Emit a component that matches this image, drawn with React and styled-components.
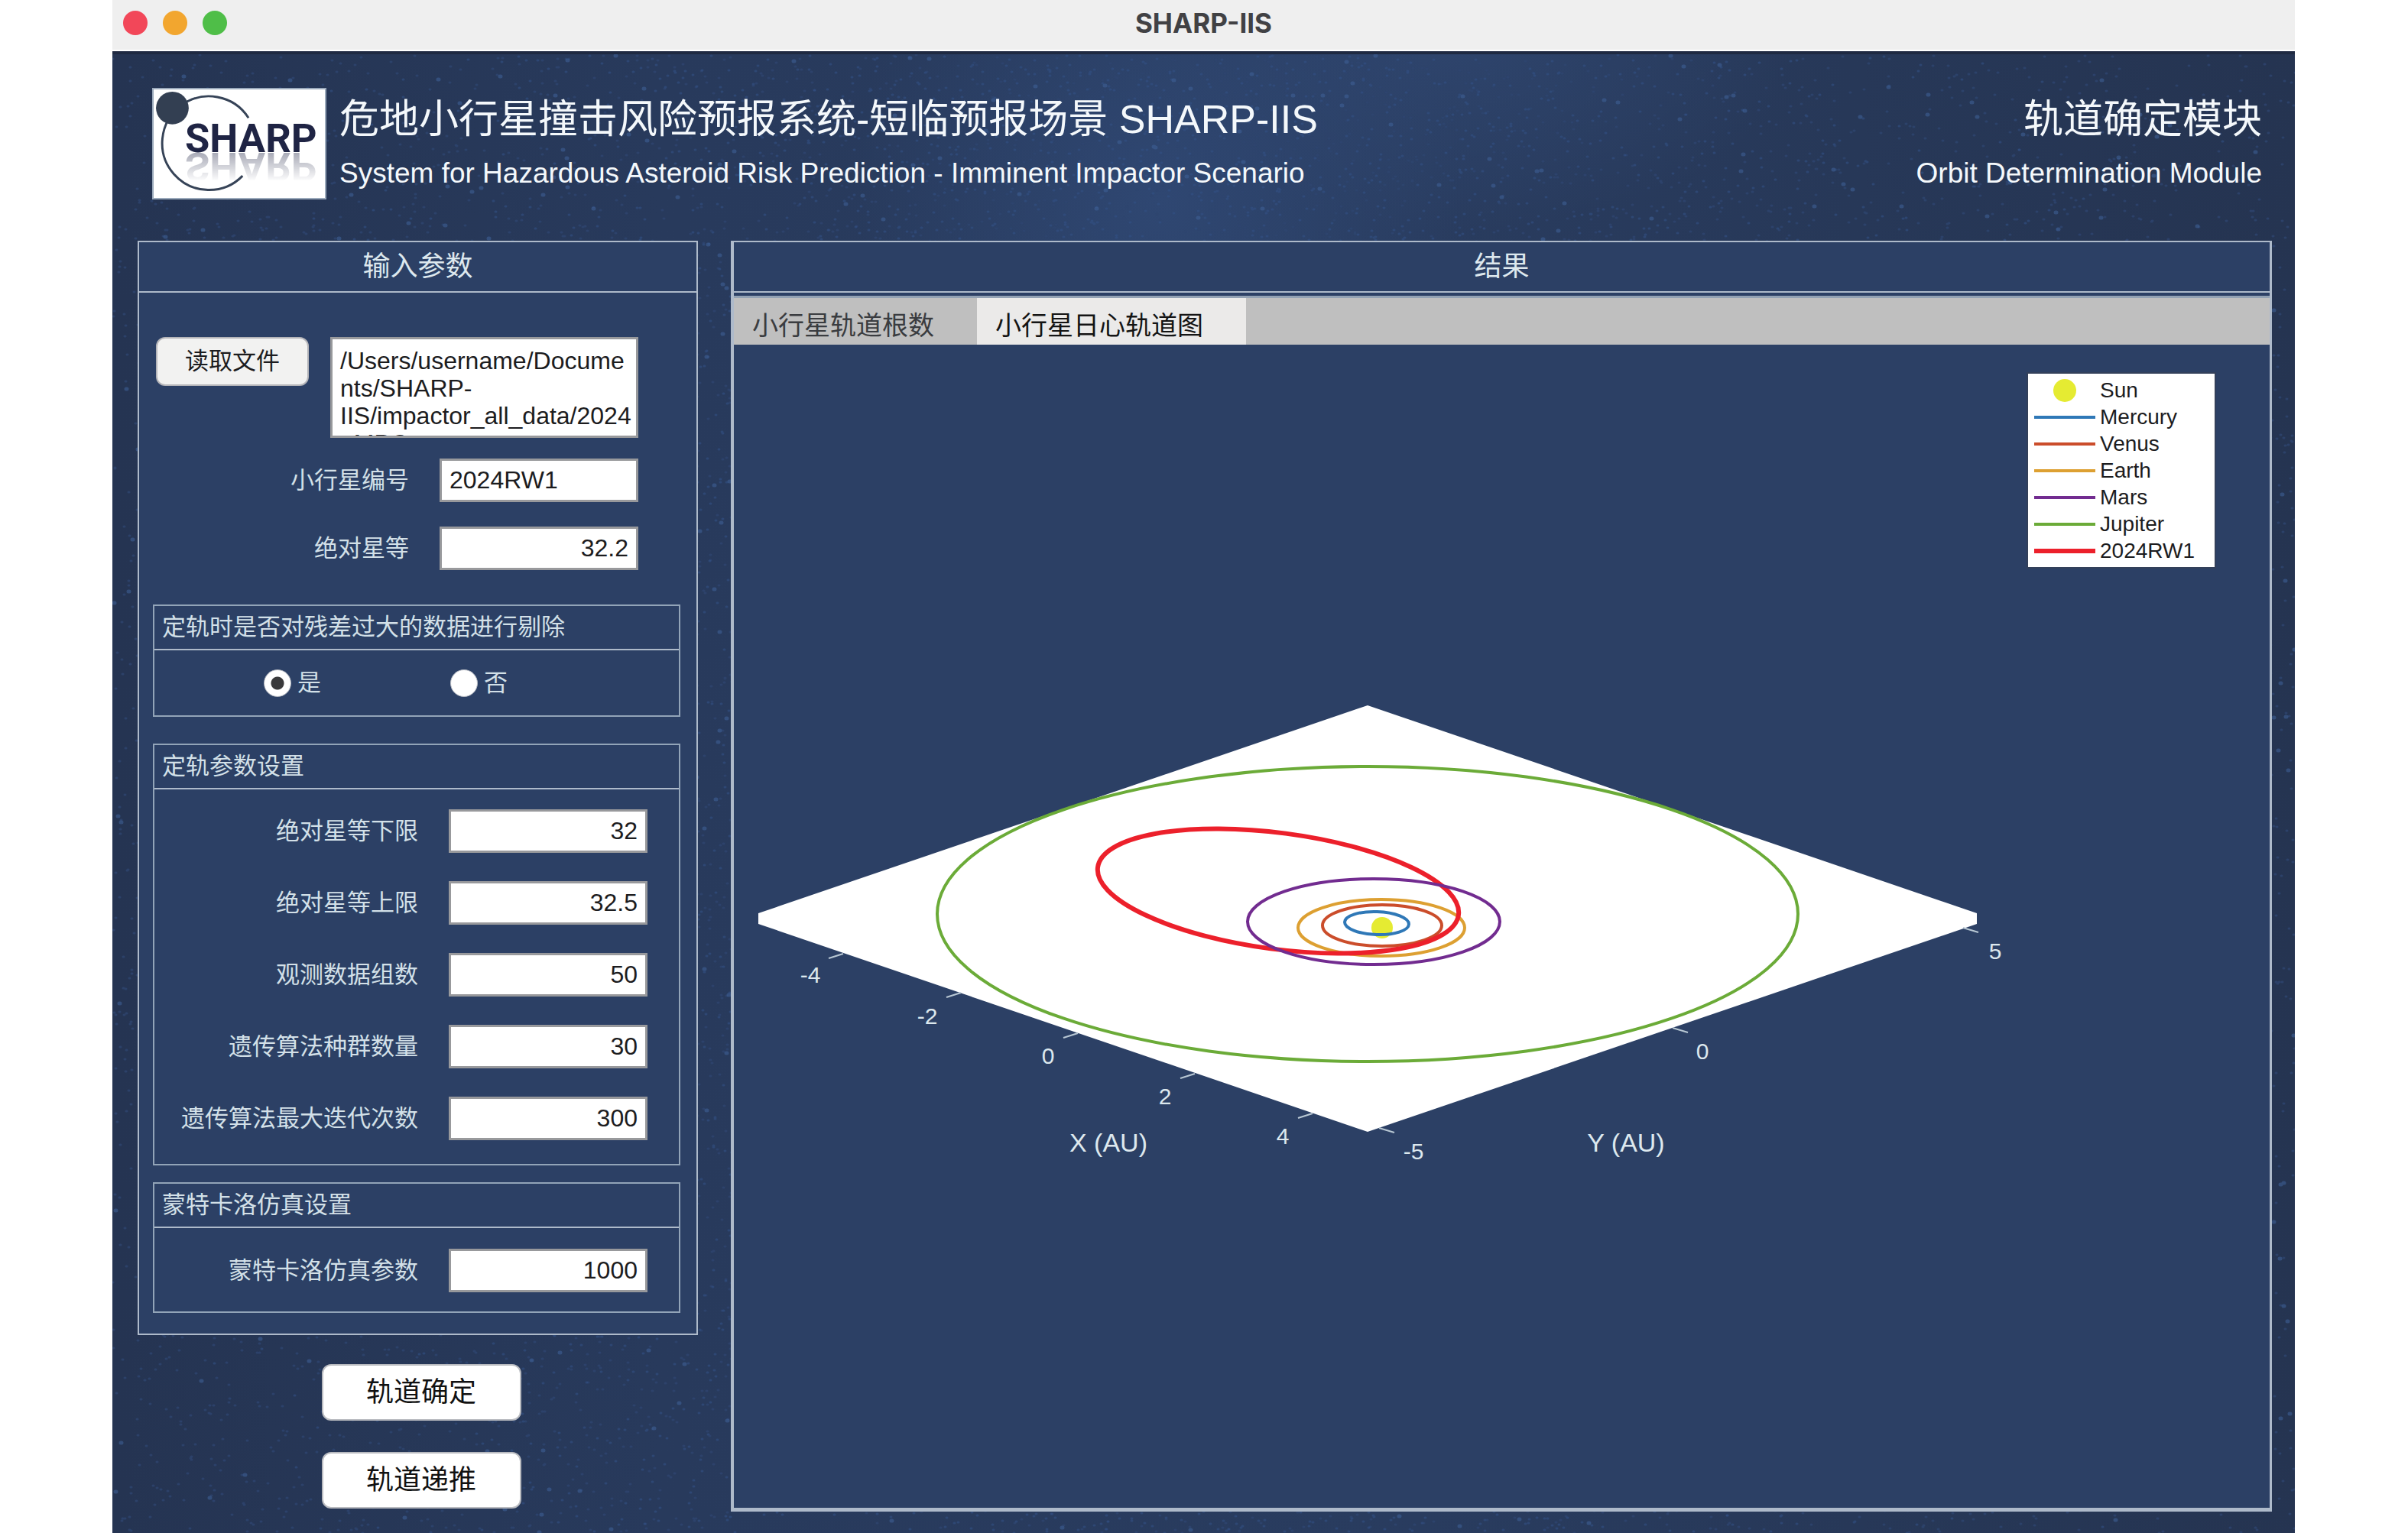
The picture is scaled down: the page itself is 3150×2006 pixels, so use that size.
import React, { useState } from "react";
import styled, { createGlobalStyle } from "styled-components";

const GlobalStyle = createGlobalStyle`
  * {
    box-sizing: border-box;
  }

  body {
    margin: 0;
    background: #fff;
    font-family: "Liberation Sans", "Noto Sans CJK SC", sans-serif;
  }

  button,
  input,
  textarea {
    margin: 0;
    font-family: inherit;
  }
`;

const Page = styled.div`
  padding: 0 148px 0 147px;
`;

const Window = styled.main`
  position: relative;
  z-index: 0;
  display: flex;
  flex-direction: column;
  min-height: 100vh;
  background: radial-gradient(ellipse 14% 22% at 48% 13%, #2f4772, transparent),
    radial-gradient(ellipse 16% 12% at 61% 3%, #2e446c, transparent),
    linear-gradient(90deg, #253452, #283a5c 25%, #293c5f 60%, #253451);
`;

// the stars lie behind everything else in the window
const Sky = styled.svg`
  position: absolute;
  inset: 0;
  z-index: -1;
  width: 100%;
  height: 100%;
  fill: none;
  stroke-linecap: round;
`;

const TitleBar = styled.div`
  display: grid;
  grid-template-columns: 1fr auto 1fr;
  align-items: center;
  height: 71px;
  padding: 0 14px 7px;
  background: #efefef;
  border-bottom: 4px solid #1f2a42;
  box-shadow: inset 0 -2px #fff;
`;

const WindowButtons = styled.div`
  display: flex;
  gap: 20px;
`;

const WindowButton = styled.button`
  width: 32px;
  height: 32px;
  padding: 0;
  border: 0;
  border-radius: 50%;
  background: ${({ $color }) => $color};
`;

const WindowTitle = styled.div`
  font-family: Inter, sans-serif;
  font-size: 35px;
  font-weight: 700;
  line-height: 40px;
  color: #414144;
`;

const Header = styled.header`
  display: flex;
  gap: 17px;
  padding: 44px 43px 54px 52px;
  color: #f4f8fb;
`;

const Logo = styled.svg`
  width: 228px;
  height: 146px;
  border: 2px solid #9aa9bb;
  background: #fff;
`;

const Heading = styled.div`
  padding-top: 2px;
  text-align: ${({ $align }) => $align || "left"};
  margin-left: ${({ $align }) => ($align === "right" ? "auto" : 0)};
`;

const Title = styled.h1`
  margin: 0;
  font-size: 52px;
  font-weight: 400;
  line-height: 78px;
`;

const Subtitle = styled.p`
  margin: 0;
  font-size: 37px;
  line-height: 64px;
`;

const Workspace = styled.div`
  flex: 1;
  display: grid;
  grid-template-columns: 733px minmax(0, 1fr);
  gap: 43px;
  padding: 0 30px 28px 33px;
`;

const Sidebar = styled.div`
  display: flex;
  flex-direction: column;
`;

const Panel = styled.section`
  display: flex;
  flex-direction: column;
  background: #2c4065;
  border-style: solid;
  border-color: #aebaca;
  border-width: ${({ $thick }) => ($thick ? "2px 3px 5px 4px" : "2px")};
`;

const PanelTitle = styled.h2`
  margin: 0;
  border-bottom: 2px solid #aebaca;
  font-size: 36px;
  font-weight: 400;
  line-height: 64px;
  text-align: center;
  color: #dde8ee;
`;

const Form = styled.form`
  display: flex;
  flex-direction: column;
  padding: 58px 21px 27px 18px;
`;

const FileRow = styled.div`
  display: flex;
  justify-content: space-between;
  align-items: flex-start;
  padding: 0 55px 27px 4px;
`;

const FileButton = styled.button`
  width: 200px;
  height: 64px;
  padding: 0;
  border: 2px solid #b5b5b9;
  border-radius: 12px;
  background: #f2f2f1;
  font-size: 31px;
  line-height: 56px;
  color: #1c1c1e;
`;

const FilePath = styled.textarea`
  width: 403px;
  height: 132px;
  padding: 10px 0 0 10px;
  border: 3px solid #98999c;
  border-radius: 0;
  background: #fff;
  font-size: 32px;
  line-height: 36px;
  color: #1c1c1e;
  resize: none;
  overflow: hidden;
`;

const Fields = styled.div`
  display: flex;
  flex-direction: column;
  gap: ${({ $gap }) => $gap}px;
  padding: ${({ $padding }) => $padding};
`;

const FieldRow = styled.div`
  display: flex;
  justify-content: flex-end;
  align-items: center;
  gap: 40px;
`;

const FieldLabel = styled.label`
  font-size: 31px;
  line-height: 40px;
  color: #d3e0e8;
`;

const FieldInput = styled.input`
  width: 260px;
  height: 57px;
  padding: 0 10px;
  border: 3px solid #98999c;
  border-radius: 0;
  background: #fff;
  font-size: 32px;
  text-align: ${({ $align }) => $align || "right"};
  color: #1c1c1e;
`;

const Group = styled.fieldset`
  min-width: 0;
  margin: ${({ $top }) => $top}px 0 0;
  padding: 0;
  border: 2px solid #92a4b8;
`;

const GroupTitle = styled.legend`
  float: left;
  width: 100%;
  padding: 0 10px;
  border-bottom: 2px solid #aebaca;
  font-size: 31px;
  line-height: 56px;
  color: #d3e0e8;
`;

const Choices = styled.div`
  clear: both;
  display: grid;
  grid-template-columns: 244px 244px;
  align-items: center;
  height: 85px;
  padding-left: 143px;
`;

const Choice = styled.label`
  display: flex;
  align-items: center;
  gap: 8px;
  font-size: 31px;
  line-height: 40px;
  color: #d3e0e8;
`;

const Radio = styled.input`
  appearance: none;
  width: 36px;
  height: 36px;
  margin: 0;
  border: 1px solid #b8bcc4;
  border-radius: 50%;
  background: #fff;

  &:checked {
    background: radial-gradient(circle, #39393b 8px, #fff 9px);
  }
`;

const Actions = styled.div`
  display: flex;
  flex-direction: column;
  align-items: center;
  gap: 41px;
  padding: 38px 0 0 9px;
`;

const ActionButton = styled.button`
  width: 261px;
  height: 74px;
  padding: 0;
  border: 2px solid #b9bbc0;
  border-radius: 12px;
  background: #fff;
  font-size: 36px;
  line-height: 66px;
  color: #111;
`;

const TabBar = styled.div`
  display: flex;
  height: 64px;
  margin-top: 4px;
  background: #bfbfbf;
  border-top: 3px solid #93a2b4;
`;

const Tab = styled.button`
  padding: 10px 56px 0 24px;
  border: 0;
  background: ${({ $active }) => ($active ? "#ebeae9" : "#bfbfbf")};
  font-size: 34px;
  line-height: 50px;
  color: ${({ $active }) => ($active ? "#141414" : "#3a3c40")};
`;

const PlotArea = styled.div`
  flex: 1;
  position: relative;
  display: flex;
  align-items: center;
`;

const Plot = styled.svg`
  display: block;
  width: 100%;

  text {
    fill: #dde8ee;
    text-anchor: middle;
  }
`;

const Legend = styled.ul`
  position: absolute;
  top: 36px;
  right: 70px;
  width: 248px;
  margin: 0;
  padding: 4px 8px;
  border: 2px solid #33405a;
  background: #fff;
  list-style: none;
`;

const LegendItem = styled.li`
  display: flex;
  align-items: center;
  gap: 6px;
  font-size: 28px;
  line-height: 35px;
  color: #1c1c1e;
`;

const Swatch = styled.span`
  width: 80px;
  height: ${({ $thick }) => ($thick ? 6 : 4)}px;
  background: ${({ $color }) => $color};
`;

const SunDot = styled.span`
  width: 30px;
  height: 30px;
  margin: 0 25px;
  border-radius: 50%;
  background: #e5eb32;
`;

const orbits = [
  { name: "Mercury", color: "#2f78b7", cx: 1801, cy: 1208, rx: 42, ry: 15, tilt: 2, width: 4 },
  { name: "Venus", color: "#cb4d2b", cx: 1808, cy: 1211, rx: 78, ry: 27, tilt: 0, width: 4 },
  { name: "Earth", color: "#dda032", cx: 1807, cy: 1214, rx: 109, ry: 37, tilt: 0, width: 4 },
  { name: "Mars", color: "#722c90", cx: 1797, cy: 1206, rx: 165, ry: 56, tilt: 0, width: 4 },
  { name: "Jupiter", color: "#6bab38", cx: 1789, cy: 1196, rx: 563, ry: 193, tilt: 0, width: 4 },
  { name: "2024RW1", color: "#ec202b", cx: 1672, cy: 1166, rx: 238, ry: 76, tilt: 7.5, width: 6 },
];

const drawOrder = ["Jupiter", "Mercury", "Venus", "Earth", "2024RW1", "Mars"];

const ticks = [
  { text: "-4", x: 1060, y: 1286, line: "M1103 1248l-19 6" },
  { text: "-2", x: 1213, y: 1340, line: "M1257 1299l-19 6" },
  { text: "0", x: 1371, y: 1392, line: "M1410 1352l-19 6" },
  { text: "2", x: 1524, y: 1445, line: "M1563 1405l-19 6" },
  { text: "4", x: 1678, y: 1497, line: "M1717 1457l-19 6" },
  { text: "-5", x: 1849, y: 1517, line: "M1804 1476l20 6" },
  { text: "0", x: 2227, y: 1386, line: "M2188 1345l20 6" },
  { text: "5", x: 2610, y: 1255, line: "M2568 1214l20 6" },
];

const fitFields = [
  { id: "magMin", label: "绝对星等下限", value: "32" },
  { id: "magMax", label: "绝对星等上限", value: "32.5" },
  { id: "obsCount", label: "观测数据组数", value: "50" },
  { id: "population", label: "遗传算法种群数量", value: "30" },
  { id: "iterations", label: "遗传算法最大迭代次数", value: "300" },
];

// same seed every time, so the sky does not change between renders
const makeStars = (count, seed, spread) => {
  let s = seed;
  const rand = () => {
    s = (s * 1664525 + 1013904223) % 4294967296;
    return s / 4294967296;
  };
  let d = "";
  for (let i = 0; i < count; i++) {
    const offset = spread ? (rand() + rand() + rand()) / 3 : rand();
    d += `M${Math.round(offset * 2855)} ${Math.round(rand() * 1934 + 72)}h1`;
  }
  return d;
};

const smallStars = makeStars(12000, 7, false);
const middleStars = makeStars(9000, 21, true);
const largeStars = makeStars(1000, 93, false);

function Field({ id, label, value, align }) {
  return (
    <FieldRow>
      <FieldLabel htmlFor={id}>{label}</FieldLabel>
      <FieldInput id={id} type="text" defaultValue={value} $align={align} />
    </FieldRow>
  );
}

function SharpLogo() {
  return (
    <Logo viewBox="0 0 228 146" role="img" aria-label="SHARP">
      <defs>
        <linearGradient id="fade" x1="0" y1="0" x2="0" y2="1">
          <stop offset="0" stopColor="#fff" stopOpacity="0.4" />
          <stop offset="1" stopColor="#fff" stopOpacity="0.02" />
        </linearGradient>
        <mask id="reflection" maskUnits="userSpaceOnUse" x="0" y="84" width="228" height="38">
          <rect x="0" y="84" width="228" height="38" fill="url(#fade)" />
        </mask>
      </defs>
      <path
        d="M118.4 116.3A63 63 0 1 1 126.4 38.3"
        fill="none"
        stroke="#364357"
        strokeWidth="3"
      />
      <circle cx="24" cy="25" r="22" fill="#333f52" />
      <g fontFamily="Roboto, sans-serif" fontSize="54" fontWeight="700" fill="#1f2444">
        <text x="41" y="84">SHARP</text>
        <g mask="url(#reflection)">
          <text x="41" y="84" transform="matrix(1 0 0 -1 0 169)" aria-hidden="true">
            SHARP
          </text>
        </g>
      </g>
    </Logo>
  );
}

function OrbitPlot() {
  return (
    <Plot viewBox="960 452 2009 1521">
      <path d="M1789 923L2586 1195V1209L1789 1481L992 1209V1195Z" fill="#fff" />
      <g fill="none" stroke="#b9c8d4" strokeWidth="2">
        {ticks.map((tick) => (
          <path key={tick.line} d={tick.line} />
        ))}
      </g>
      <circle cx="1808" cy="1214" r="14" fill="#e5eb32" />
      <g fill="none">
        {drawOrder.map((name) => {
          const o = orbits.find((orbit) => orbit.name === name);
          return (
            <ellipse
              key={name}
              cx={o.cx}
              cy={o.cy}
              rx={o.rx}
              ry={o.ry}
              stroke={o.color}
              strokeWidth={o.width}
              transform={`rotate(${o.tilt} ${o.cx} ${o.cy})`}
            />
          );
        })}
      </g>
      <g fontSize="30">
        {ticks.map((tick) => (
          <text key={tick.line} x={tick.x} y={tick.y}>
            {tick.text}
          </text>
        ))}
      </g>
      <g fontSize="34">
        <text x="1450" y="1507">X (AU)</text>
        <text x="2127" y="1507">Y (AU)</text>
      </g>
    </Plot>
  );
}

function App() {
  const [tab, setTab] = useState("orbit");

  return (
    <Page>
      <GlobalStyle />
      <Window>
        <Sky viewBox="0 0 2855 2006" preserveAspectRatio="xMidYMin slice" aria-hidden="true">
          <path d={smallStars} stroke="#2e456f" strokeWidth="3" opacity="0.8" />
          <path d={middleStars} stroke="#325084" strokeWidth="3" opacity="0.6" />
          <path d={largeStars} stroke="#3d5f94" strokeWidth="5" opacity="0.6" />
        </Sky>

        <TitleBar>
          <WindowButtons>
            <WindowButton type="button" aria-label="Close" $color="#f24759" />
            <WindowButton type="button" aria-label="Minimize" $color="#f2a62f" />
            <WindowButton type="button" aria-label="Zoom" $color="#4fbe48" />
          </WindowButtons>
          <WindowTitle>SHARP-IIS</WindowTitle>
        </TitleBar>

        <Header>
          <SharpLogo />
          <Heading>
            <Title>危地小行星撞击风险预报系统-短临预报场景 SHARP-IIS</Title>
            <Subtitle>
              System for Hazardous Asteroid Risk Prediction - Imminent Impactor Scenario
            </Subtitle>
          </Heading>
          <Heading $align="right">
            <Title as="h2">轨道确定模块</Title>
            <Subtitle>Orbit Determination Module</Subtitle>
          </Heading>
        </Header>

        <Workspace>
          <Sidebar>
            <Panel>
              <PanelTitle>输入参数</PanelTitle>
              <Form>
                <FileRow>
                  <FileButton type="button">读取文件</FileButton>
                  <FilePath
                    aria-label="读取文件"
                    spellCheck={false}
                    defaultValue={
                      "/Users/username/Docume\nnts/SHARP-\nIIS/impactor_all_data/2024\n_MPC.txt"
                    }
                  />
                </FileRow>
                <Fields $gap={32} $padding="0 55px 0 0">
                  <Field id="name" label="小行星编号" value="2024RW1" align="left" />
                  <Field id="magnitude" label="绝对星等" value="32.2" />
                </Fields>

                <Group $top={45}>
                  <GroupTitle>定轨时是否对残差过大的数据进行剔除</GroupTitle>
                  <Choices>
                    <Choice>
                      <Radio type="radio" name="reject" value="yes" defaultChecked />是
                    </Choice>
                    <Choice>
                      <Radio type="radio" name="reject" value="no" />否
                    </Choice>
                  </Choices>
                </Group>

                <Group $top={35}>
                  <GroupTitle>定轨参数设置</GroupTitle>
                  <Fields $gap={37} $padding="26px 41px 31px 0">
                    {fitFields.map((field) => (
                      <Field key={field.id} {...field} />
                    ))}
                  </Fields>
                </Group>

                <Group $top={22}>
                  <GroupTitle>蒙特卡洛仿真设置</GroupTitle>
                  <Fields $gap={37} $padding="27px 41px 25px 0">
                    <Field id="monteCarlo" label="蒙特卡洛仿真参数" value="1000" />
                  </Fields>
                </Group>
              </Form>
            </Panel>
            <Actions>
              <ActionButton type="button">轨道确定</ActionButton>
              <ActionButton type="button">轨道递推</ActionButton>
            </Actions>
          </Sidebar>

          <Panel $thick>
            <PanelTitle>结果</PanelTitle>
            <TabBar role="tablist">
              <Tab
                type="button"
                role="tab"
                aria-selected={tab === "elements"}
                $active={tab === "elements"}
                onClick={() => setTab("elements")}
              >
                小行星轨道根数
              </Tab>
              <Tab
                type="button"
                role="tab"
                aria-selected={tab === "orbit"}
                $active={tab === "orbit"}
                onClick={() => setTab("orbit")}
              >
                小行星日心轨道图
              </Tab>
            </TabBar>
            <PlotArea>
              {tab === "orbit" && (
                <>
                  <OrbitPlot />
                  <Legend>
                    <LegendItem>
                      <SunDot />
                      Sun
                    </LegendItem>
                    {orbits.map((orbit) => (
                      <LegendItem key={orbit.name}>
                        <Swatch $color={orbit.color} $thick={orbit.width > 4} />
                        {orbit.name}
                      </LegendItem>
                    ))}
                  </Legend>
                </>
              )}
            </PlotArea>
          </Panel>
        </Workspace>
      </Window>
    </Page>
  );
}

export default App;
